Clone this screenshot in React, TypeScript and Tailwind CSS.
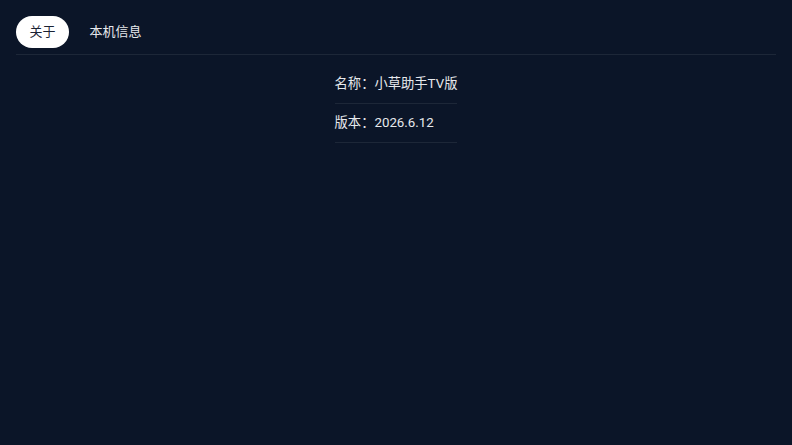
export default function App() {
  const tabs = ["关于", "本机信息"];
  const rows = ["名称：小草助手TV版", "版本：2026.6.12"];
  return (
    <div
      className="w-[792px] h-[445px] bg-[#0b1528] text-[#e6e8ec] px-4 pt-4"
      style={{ fontFamily: 'Roboto, "Noto Sans CJK SC", sans-serif' }}
    >
      {/* Tabs */}
      <div className="flex items-center gap-[7px] pb-1.5 border-b border-[#1d2738]">
        {tabs.map((t, i) => (
          <div
            key={t}
            className={`h-8 px-[13.5px] flex items-center rounded-full text-[13px] ${
              i === 0 ? "bg-white text-[#1a2233]" : "text-[#e6e8ec]"
            }`}
          >
            {t}
          </div>
        ))}
      </div>

      {/* Info */}
      <div className="flex justify-center pt-2.5">
        <div className="flex flex-col">
          {rows.map((r) => (
            <div
              key={r}
              className="h-[39px] flex items-center text-[13.3px] border-b border-[#1d2738]"
            >
              {r}
            </div>
          ))}
        </div>
      </div>
    </div>
  );
}
